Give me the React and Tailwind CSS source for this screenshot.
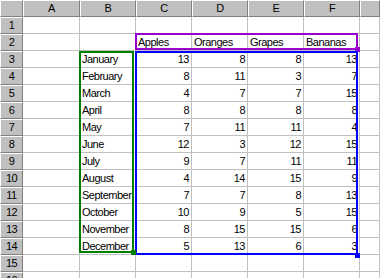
import React from "react";

const cols = ["A", "B", "C", "D", "E", "F", ""];
const fruits = ["Apples", "Oranges", "Grapes", "Bananas"];
const data = [
  ["January", 13, 8, 8, 13],
  ["February", 8, 11, 3, 7],
  ["March", 4, 7, 7, 15],
  ["April", 8, 8, 8, 8],
  ["May", 7, 11, 11, 4],
  ["June", 12, 3, 12, 15],
  ["July", 9, 7, 11, 11],
  ["August", 4, 14, 15, 9],
  ["September", 7, 7, 8, 13],
  ["October", 10, 9, 5, 15],
  ["November", 8, 15, 15, 6],
  ["December", 5, 13, 6, 3],
];

function rowCells(r) {
  const cells = Array.from({ length: 7 }, () => ({ text: "", align: "left" }));
  if (r === 2) {
    fruits.forEach((f, i) => (cells[2 + i] = { text: f, align: "left" }));
  } else if (r >= 3 && r <= 14) {
    const d = data[r - 3];
    cells[1] = { text: d[0], align: "left" };
    for (let i = 0; i < 4; i++) cells[2 + i] = { text: String(d[1 + i]), align: "right" };
  }
  return cells;
}

const headerCls =
  "bg-[#c0c0c0] border-t border-l border-t-white border-l-white border-r border-b border-r-[#808080] border-b-[#808080] flex items-center justify-center text-black";

export default function App() {
  const rows = Array.from({ length: 16 }, (_, i) => i + 1);
  return (
    <div
      className="relative w-[380px] h-[278px] overflow-hidden bg-white text-[11px] tracking-[-0.5px] text-black"
      style={{ fontFamily: '"Liberation Sans", Arial, sans-serif' }}
    >
      <div className="grid grid-cols-[23px_57px_56px_56px_56px_56px_56px_1fr] auto-rows-[17px]">
        <div className={headerCls}></div>
        {cols.map((c, i) => (
          <div key={"h" + i} className={headerCls}>
            {c}
          </div>
        ))}
        {rows.map((r) => (
          <React.Fragment key={r}>
            <div className={headerCls}>{r}</div>
            {rowCells(r).map((cell, ci) => (
              <div
                key={ci}
                className={
                  "border-r border-b border-[#c0c0c0] px-[2px] leading-[16px] whitespace-nowrap overflow-hidden " +
                  (cell.align === "right" ? "text-right" : "text-left")
                }
              >
                {cell.text}
              </div>
            ))}
          </React.Fragment>
        ))}
      </div>

      {/* range finder overlays */}
      <div className="absolute left-[135px] top-[33px] w-[223px] h-[17px] border-2 border-[#9900cc]"></div>
      <div className="absolute left-[355px] top-[47px] w-[5px] h-[5px] bg-[#9900cc]"></div>

      <div className="absolute left-[135px] top-[51px] w-[223px] h-[204px] border-2 border-[#0000ff]"></div>
      <div className="absolute left-[355px] top-[253px] w-[5px] h-[5px] bg-[#0000ff]"></div>

      <div className="absolute left-[79px] top-[51px] w-[55px] h-[202px] border-2 border-[#008000]"></div>
      <div className="absolute left-[131px] top-[250px] w-[5px] h-[5px] bg-[#008000]"></div>
    </div>
  );
}
